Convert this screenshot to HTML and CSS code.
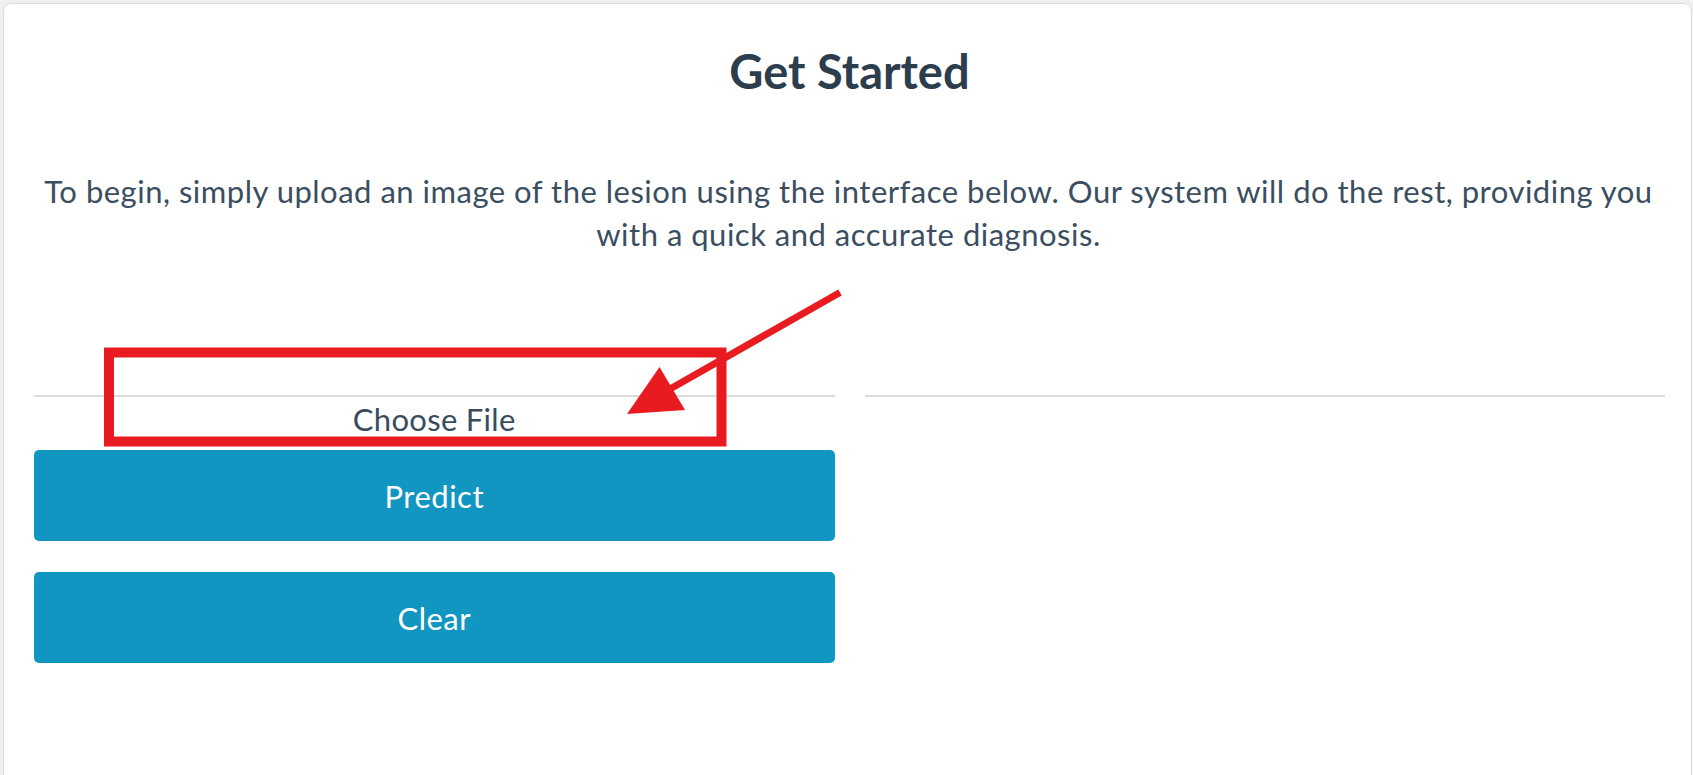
FILE: index.html
```html
<!DOCTYPE html>
<html lang="en">
<head>
<meta charset="utf-8">
<title>Get Started</title>
<link rel="stylesheet" href="styles.css">
</head>
<body>
<main class="card">
  <h1 class="title">Get Started</h1>
  <p class="intro">To begin, simply upload an image of the lesion using the interface below. Our system will do the rest, providing you with a quick and accurate diagnosis.</p>
  <div class="cols">
    <section class="col">
      <hr class="rule">
      <label class="file-label">Choose File<input type="file" class="file-input"></label>
      <button class="btn" type="button">Predict</button>
      <button class="btn" type="button">Clear</button>
    </section>
    <section class="col">
      <hr class="rule">
    </section>
  </div>
</main>
<svg class="annotation" width="1693" height="775" viewBox="0 0 1693 775" aria-hidden="true">
  <rect x="109" y="352.5" width="612.5" height="89" fill="none" stroke="#e81c20" stroke-width="10"/>
  <line x1="840" y1="292.5" x2="670" y2="389" stroke="#e81c20" stroke-width="7"/>
  <polygon points="627,414 659.5,367 685,410" fill="#e81c20"/>
</svg>
</body>
</html>
```
FILE: styles.css
```css
html, body {
  margin: 0;
  padding: 0;
}
body {
  background: #f0f0f0;
  font-family: Lato, "Open Sans", sans-serif;
  color: #3b4c5d;
  height: 775px;
  overflow: hidden;
  position: relative;
}
.card {
  margin: 3px 1px 0 3px;
  background: #ffffff;
  border: 1px solid #dddddd;
  border-radius: 8px;
  min-height: 800px;
  padding: 0 26px 0 30px;
  box-sizing: border-box;
}
.title {
  margin: 0;
  padding-top: 40px;
  font-size: 47px;
  line-height: 54px;
  font-weight: 700;
  text-align: center;
  color: #2c3e4e;
}
.intro {
  margin: 72px -20px 0 -22px;
  font-size: 31px;
  line-height: 43px;
  letter-spacing: 0.5px;
  text-align: center;
  color: #3b4e5f;
}
.cols {
  display: grid;
  grid-template-columns: 1fr 1fr;
  column-gap: 30px;
  margin-top: 139px;
}
.col {
  display: flex;
  flex-direction: column;
}
.rule {
  margin: 0;
  border: 0;
  height: 2px;
  background: #dcdcdc;
}
.file-label {
  display: block;
  margin: 5px 0 14px;
  font-size: 31px;
  line-height: 34px;
  letter-spacing: 0.3px;
  text-align: center;
  color: #384c5e;
}
.file-input {
  display: none;
}
.btn {
  display: flex;
  align-items: center;
  justify-content: center;
  height: 91px;
  margin: 0 0 31px;
  border: 0;
  border-radius: 5px;
  background: #1196c2;
  color: #ffffff;
  font-family: Lato, "Open Sans", sans-serif;
  font-size: 31px;
  letter-spacing: 0.5px;
}
.annotation {
  position: absolute;
  top: 0;
  left: 0;
  pointer-events: none;
}
```
